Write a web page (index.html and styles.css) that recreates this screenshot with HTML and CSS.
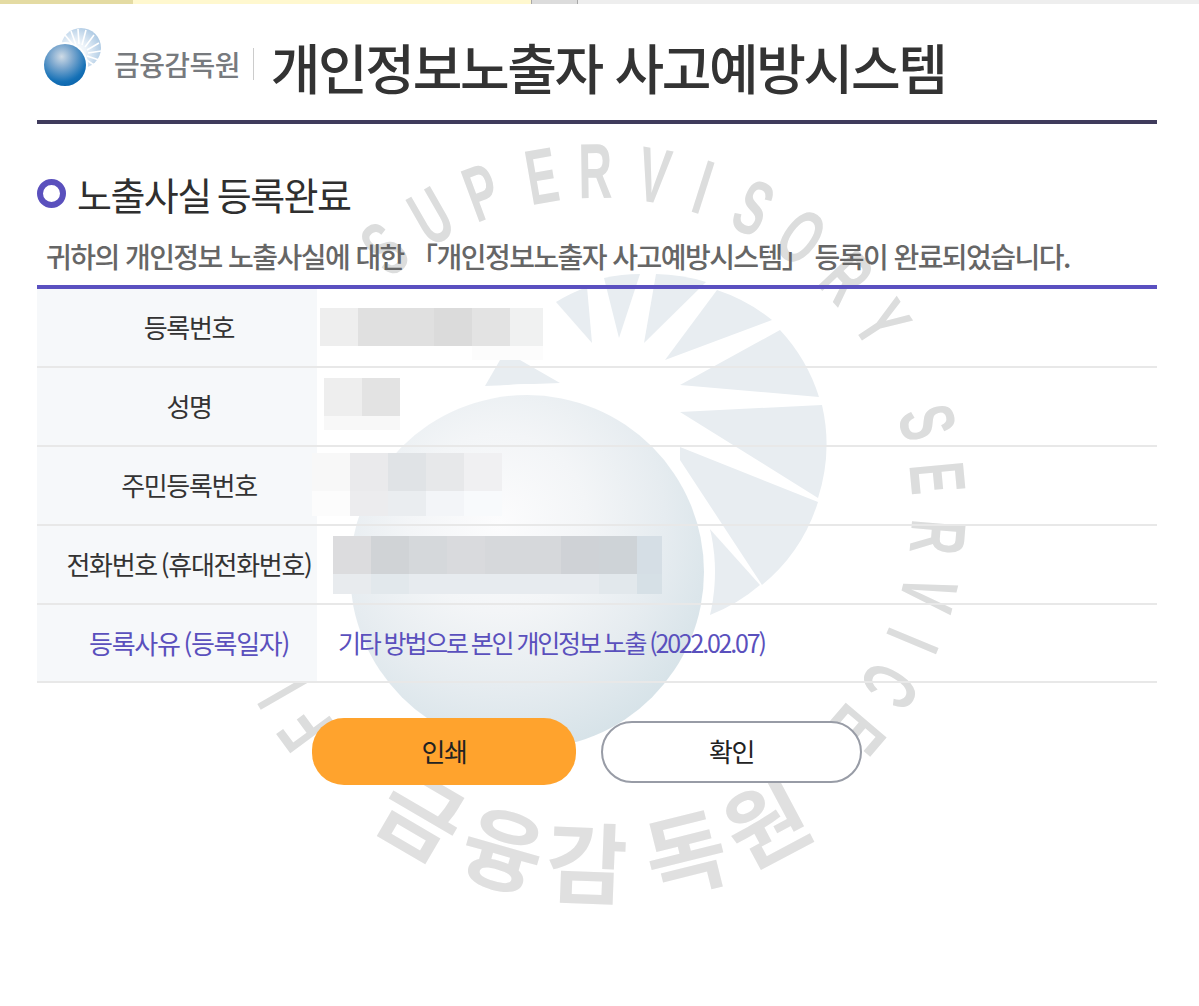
FILE: index.html
```
<!DOCTYPE html>
<html lang="ko">
<head>
<meta charset="utf-8">
<title>개인정보노출자 사고예방시스템</title>
<link rel="stylesheet" href="styles.css">
</head>
<body>
<div class="tabstrip"><span class="t1"></span><span class="t2"></span><span class="t3"></span><span class="t4"></span></div>
<svg class="watermark" width="1199" height="907" viewBox="0 0 1199 907" aria-hidden="true">
  <defs>
    <radialGradient id="ballG" cx="0.42" cy="0.36" r="0.72">
      <stop offset="0" stop-color="#fcfcfd"/>
      <stop offset="0.35" stop-color="#f3f5f7"/>
      <stop offset="0.65" stop-color="#e6ecf0"/>
      <stop offset="1" stop-color="#d2e0e6"/>
    </radialGradient>
  </defs>
  <g class="sun">
    <path d="M485 386 L500 360 L520 360 L560 383 Z"/>
    <path d="M556 302 A175 175 0 0 1 587 287 L592 343 Z"/>
    <path d="M604 278 A175 175 0 0 1 640 274 L619 338 Z"/>
    <path d="M656 274 A175 175 0 0 1 706 282 L644 343 Z"/>
    <path d="M717 290 A175 175 0 0 1 772 320 L665 360 Z"/>
    <path d="M780 330 A175 175 0 0 1 819 397 L680 385 Z"/>
    <path d="M680 412 L822 405 A175 175 0 0 1 818 498 Z"/>
    <path d="M680 447 L818 502 A175 175 0 0 1 762 585 L680 460 Z"/>
    <path d="M708 527 L760 585 A175 175 0 0 1 710 615 Z"/>
  </g>
  <circle class="halo" cx="527" cy="572" r="188"/>
  <circle class="ball" cx="527" cy="572" r="177"/>
  <g class="wm-en">
    <text transform="rotate(-39.5 600 510) translate(600 198) scale(.6 1)">S</text>
    <text transform="rotate(-29.9 600 510) translate(600 198) scale(.6 1)">U</text>
    <text transform="rotate(-20.4 600 510) translate(600 198) scale(.6 1)">P</text>
    <text transform="rotate(-9.9 600 510) translate(600 198) scale(.6 1)">E</text>
    <text transform="rotate(-.8 600 510) translate(600 198) scale(.6 1)">R</text>
    <text transform="rotate(9.2 600 510) translate(600 198) scale(.6 1)">V</text>
    <text transform="rotate(17.7 600 510) translate(600 198) scale(.6 1)">I</text>
    <text transform="rotate(26.9 600 510) translate(600 198) scale(.6 1)">S</text>
    <text transform="rotate(36.4 600 510) translate(600 198) scale(.6 1)">O</text>
    <text transform="rotate(46.7 600 510) translate(600 198) scale(.6 1)">R</text>
    <text transform="rotate(56.5 600 510) translate(600 198) scale(.6 1)">Y</text>
    <text transform="rotate(75 600 510) translate(600 198) scale(.6 1)">S</text>
    <text transform="rotate(84.6 600 510) translate(600 198) scale(.6 1)">E</text>
    <text transform="rotate(94.6 600 510) translate(600 198) scale(.6 1)">R</text>
    <text transform="rotate(104.3 600 510) translate(600 198) scale(.6 1)">V</text>
    <text transform="rotate(112.7 600 510) translate(600 198) scale(.6 1)">I</text>
    <text transform="rotate(121.2 600 510) translate(600 198) scale(.6 1)">C</text>
    <text transform="rotate(130.4 600 510) translate(600 198) scale(.6 1)">E</text>
    <text transform="rotate(-120 600 510) translate(600 170) scale(.6 1)">I</text>
    <text transform="rotate(-126.5 600 510) translate(600 170) scale(.6 1)">F</text>
  </g>
  <g class="wm-ko">
    <text transform="rotate(30.3 600 510)" x="600" y="897">금</text>
    <text transform="rotate(15.9 600 510)" x="600" y="897">융</text>
    <text transform="rotate(2.1 600 510)" x="600" y="897">감</text>
    <text transform="rotate(-14 600 510)" x="600" y="897">독</text>
    <text transform="rotate(-28 600 510)" x="600" y="897">원</text>
  </g>
</svg>
<div class="page">
  <header class="head">
    <div class="logo">
      <svg class="logo-mark" width="60" height="60" viewBox="0 0 60 60" aria-hidden="true">
        <defs>
          <radialGradient id="lg" cx="0.42" cy="0.3" r="0.75">
            <stop offset="0" stop-color="#cfdbe6"/>
            <stop offset="0.35" stop-color="#7fa9cf"/>
            <stop offset="0.8" stop-color="#1470b6"/>
            <stop offset="1" stop-color="#0a63ab"/>
          </radialGradient>
          <radialGradient id="ls" cx="0.35" cy="0.6" r="0.75">
            <stop offset="0" stop-color="#ffffff"/>
            <stop offset="0.35" stop-color="#eef4fa"/>
            <stop offset="1" stop-color="#a3c3e0"/>
          </radialGradient>
        </defs>
        <circle cx="38" cy="20" r="20" fill="url(#ls)"/>
        <path class="logo-rays" d="M31 18 L22 7 M33 17 L28 3 M36 16 L35 1 M39 17 L43 2 M42 19 L51 7 M44 22 L56 15 M45 25 L58 23 M44 28 L56 32 M42 31 L51 37"/>
        <circle cx="22" cy="37" r="23" fill="#fff"/>
        <circle cx="22" cy="37" r="21" fill="url(#lg)"/>
      </svg>
      <span class="logo-name">금융감독원</span>
      <span class="logo-sep"></span>
    </div>
    <h1>개인정보노출자 사고예방시스템</h1>
  </header>
  <h2><span class="ring"></span>노출사실 등록완료</h2>
  <p class="lead">귀하의 개인정보 노출사실에 대한 「개인정보노출자 사고예방시스템」 등록이 완료되었습니다.</p>
  <div class="info">
    <div class="row">
      <div class="th">등록번호</div>
      <div class="td">
        <div class="mosaic m1">
          <i class="c1"></i><i class="c2"></i><i class="c2"></i><i class="c3"></i><i class="c4"></i><i class="c5 narrow"></i>
          <i></i><i></i><i></i><i></i><i class="low"></i><i class="low narrow"></i>
        </div>
      </div>
    </div>
    <div class="row">
      <div class="th">성명</div>
      <div class="td">
        <div class="mosaic m2">
          <i class="c1"></i><i class="c4"></i>
          <i class="low2"></i><i class="low2"></i>
        </div>
      </div>
    </div>
    <div class="row">
      <div class="th">주민등록번호</div>
      <div class="td">
        <div class="mosaic m3">
          <i class="d1"></i><i class="d2"></i><i class="d3"></i><i class="d4"></i><i class="d5"></i>
          <i class="low"></i><i class="d6"></i><i class="d7"></i><i class="d8"></i><i class="d9"></i>
        </div>
      </div>
    </div>
    <div class="row">
      <div class="th">전화번호 (휴대전화번호)</div>
      <div class="td">
        <div class="mosaic m4">
          <i class="e1"></i><i class="e2"></i><i class="e3"></i><i class="e4"></i><i class="e5"></i><i class="e5"></i><i class="e6"></i><i class="e7"></i><i class="e8 narrow"></i>
          <i class="f1"></i><i class="f2"></i><i class="f3"></i><i class="f3"></i><i class="f3"></i><i class="f3"></i><i class="f3"></i><i class="f2"></i><i class="f4 narrow"></i>
        </div>
      </div>
    </div>
    <div class="row accent">
      <div class="th">등록사유 (등록일자)</div>
      <div class="td text">기타 방법으로 본인 개인정보 노출 (2022.02.07)</div>
    </div>
  </div>
  <div class="actions">
    <button class="btn primary" type="button">인쇄</button>
    <button class="btn plain" type="button">확인</button>
  </div>
</div>
</body>
</html>
```
FILE: styles.css
```
* { box-sizing: border-box; }
html, body { margin: 0; padding: 0; background: #fff; }
body {
  position: relative;
  height: 1006px;
  overflow: hidden;
  font-family: "Noto Sans CJK KR", "Noto Sans", sans-serif;
  color: #333;
}
.tabstrip { display: flex; height: 4px; position: relative; z-index: 1; }
.tabstrip span { display: block; height: 100%; }
.t1 { width: 133px; background: #e4dba3; }
.t2 { width: 399px; background: #fff8cf; border-right: 1px solid #a8a8a8; }
.t3 { width: 46px; background: #dcdcdc; border-right: 1px solid #a8a8a8; }
.t4 { flex: 1; background: #eeeeee; }

.watermark { position: absolute; left: 0; top: 0; z-index: 0; }
.sun path { fill: #e8edf1; }
.halo { fill: #fff; }
.ball { fill: url(#ballG); }
.wm-en text { font-family: "Liberation Sans", sans-serif; font-weight: 700; font-size: 78px; text-anchor: middle; fill: #dcdddd; }
.wm-ko text { font-family: "Noto Sans CJK KR", sans-serif; font-weight: 700; font-size: 88px; text-anchor: middle; fill: #e0e0e0; }

.page { position: relative; z-index: 1; padding: 0 42px 0 37px; }
.head {
  display: flex;
  align-items: center;
  height: 120px;
  border-bottom: 4px solid #3f3b5c;
  padding-top: 10px;
  padding-left: 6px;
}
.logo { display: flex; align-items: center; }
.logo-mark { display: block; margin-bottom: 18px; }
.logo-rays { stroke: #fff; stroke-width: 1.6; fill: none; }
.logo-name { font-size: 28px; font-weight: 500; letter-spacing: -0.6px; color: #777a7e; margin-left: 11px; margin-bottom: 6px; white-space: nowrap; }
.logo-sep { width: 1px; height: 32px; background: #ccc; margin-left: 13px; margin-bottom: 6px; }
h1 { margin: 0 0 0 17px; font-size: 54px; font-weight: 500; letter-spacing: -2.4px; color: #333; white-space: nowrap; line-height: 1.2; }
h2 {
  display: flex;
  align-items: center;
  margin: 44px 0 0;
  height: 50px;
  font-size: 38px;
  font-weight: 400;
  letter-spacing: -1.55px;
  word-spacing: -3px;
  color: #2f2f2f;
  white-space: nowrap;
}
.ring { width: 29px; height: 29px; border: 6px solid #5a50bd; border-radius: 50%; margin-right: 11px; background: #fff; }
.lead { margin: 20px 0 0; padding-left: 9px; font-size: 28px; font-weight: 500; letter-spacing: -1.55px; color: #666; line-height: 36px; white-space: nowrap; }
.info { border-top: 4px solid #5a50c0; margin-top: 11px; }
.row { display: flex; height: 79px; border-bottom: 2px solid #e8e8e8; }
.row.accent { height: 78px; }
.th {
  width: 280px;
  flex: none;
  display: flex;
  align-items: center;
  justify-content: center;
  background: #f6f8fa;
  font-size: 26px;
  letter-spacing: -1.3px;
  word-spacing: -2px;
  color: #333;
  white-space: nowrap;
  padding: 0 0 2px 24px;
}
.td { flex: 1; position: relative; min-width: 0; }
.td.text { display: flex; align-items: center; padding-left: 21px; font-size: 25px; letter-spacing: -2.2px; word-spacing: -0.8px; white-space: nowrap; padding-bottom: 2px; }
.accent .th, .accent .td { color: #5a50bd; }

.mosaic { position: absolute; display: grid; grid-auto-rows: 38px; }
.mosaic i { display: block; width: 38px; }
.mosaic i.narrow { width: 33px; }
.m1 { left: 3px; top: 19px; grid-template-columns: repeat(6, auto); grid-template-rows: 38px 14px; }
.m2 { left: 7px; top: 10px; grid-template-columns: repeat(2, auto); grid-template-rows: 38px 14px; }
.m3 { left: -5px; top: 6px; grid-template-columns: repeat(5, auto); grid-template-rows: 38px 25px; }
.m4 { left: 16px; top: 10px; grid-template-columns: repeat(9, auto); grid-template-rows: 38px 20px; }
.mosaic .c1 { background: #eeeeee; }
.mosaic .c2 { background: #e0e0e0; }
.mosaic .c3 { background: #dbdbdb; }
.mosaic .c4 { background: #e3e3e3; }
.mosaic .c5 { background: #f0f1f1; }
.mosaic .low { background: #fcfcfc; }
.mosaic .low2 { background: #f8f8f8; }
.mosaic .d1 { background: #f8f8f8; }
.mosaic .d2 { background: #eaeaec; }
.mosaic .d3 { background: #e0e3e6; }
.mosaic .d4 { background: #e7e8ea; }
.mosaic .d5 { background: #f0f0f2; }
.mosaic .d6 { background: #ececee; }
.mosaic .d7 { background: #eaedf0; }
.mosaic .d8 { background: #f3f5f8; }
.mosaic .d9 { background: #f8fafc; }
.mosaic .e1 { background: #dcdcde; }
.mosaic .e2 { background: #d0d3d6; }
.mosaic .e3 { background: #d5d8db; }
.mosaic .e4 { background: #d9dadd; }
.mosaic .e5 { background: #d6d8db; }
.mosaic .e6 { background: #cfd2d6; }
.mosaic .e7 { background: #ced3d7; }
.mosaic .e8.narrow { background: #d5dee5; width: 25px; }
.mosaic .f1 { background: #e8ebee; }
.mosaic .f2 { background: #e2e8ec; }
.mosaic .f3 { background: #e7ebef; }
.mosaic .f4.narrow { background: #d6e0e6; width: 25px; }

.actions { display: flex; align-items: center; margin-top: 35px; padding-left: 275px; gap: 25px; }
.btn {
  display: block;
  font-family: inherit;
  font-size: 26px;
  letter-spacing: -1.5px;
  color: #222;
  padding: 0 0 2px;
  cursor: pointer;
}
.primary { width: 264px; height: 67px; background: #ffa32d; border: 0; border-radius: 32px; }
.plain { width: 261px; height: 62px; background: #fff; border: 2px solid #989ca6; border-radius: 31px; }
```
